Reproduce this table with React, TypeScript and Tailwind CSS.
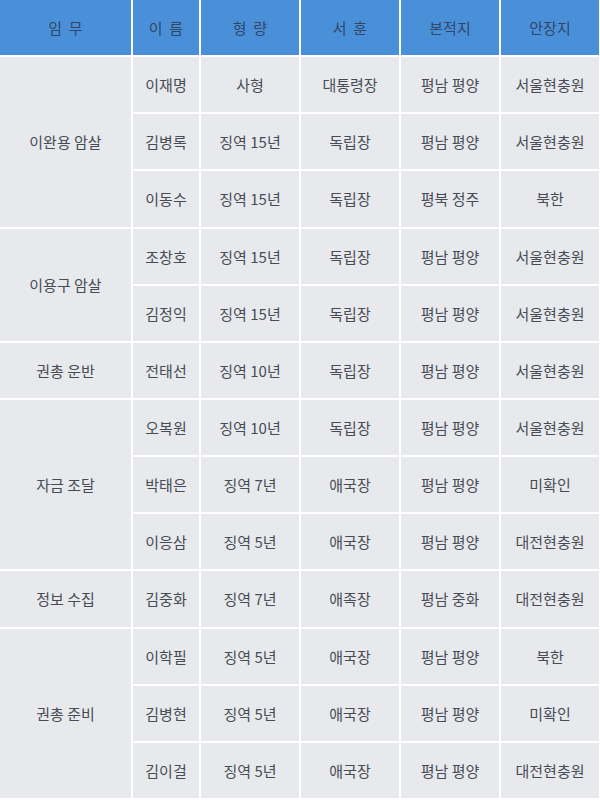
import React from 'react'

type Row = {
  name: string
  sentence: string
  award: string
  origin: string
  burial: string
}

type Group = {
  mission: string
  span: string
  rows: Row[]
}

const groups: Group[] = [
  {
    mission: '이완용 암살',
    span: 'row-span-3',
    rows: [
      { name: '이재명', sentence: '사형', award: '대통령장', origin: '평남 평양', burial: '서울현충원' },
      { name: '김병록', sentence: '징역 15년', award: '독립장', origin: '평남 평양', burial: '서울현충원' },
      { name: '이동수', sentence: '징역 15년', award: '독립장', origin: '평북 정주', burial: '북한' },
    ],
  },
  {
    mission: '이용구 암살',
    span: 'row-span-2',
    rows: [
      { name: '조창호', sentence: '징역 15년', award: '독립장', origin: '평남 평양', burial: '서울현충원' },
      { name: '김정익', sentence: '징역 15년', award: '독립장', origin: '평남 평양', burial: '서울현충원' },
    ],
  },
  {
    mission: '권총 운반',
    span: 'row-span-1',
    rows: [
      { name: '전태선', sentence: '징역 10년', award: '독립장', origin: '평남 평양', burial: '서울현충원' },
    ],
  },
  {
    mission: '자금 조달',
    span: 'row-span-3',
    rows: [
      { name: '오복원', sentence: '징역 10년', award: '독립장', origin: '평남 평양', burial: '서울현충원' },
      { name: '박태은', sentence: '징역 7년', award: '애국장', origin: '평남 평양', burial: '미확인' },
      { name: '이응삼', sentence: '징역 5년', award: '애국장', origin: '평남 평양', burial: '대전현충원' },
    ],
  },
  {
    mission: '정보 수집',
    span: 'row-span-1',
    rows: [
      { name: '김중화', sentence: '징역 7년', award: '애족장', origin: '평남 중화', burial: '대전현충원' },
    ],
  },
  {
    mission: '권총 준비',
    span: 'row-span-3',
    rows: [
      { name: '이학필', sentence: '징역 5년', award: '애국장', origin: '평남 평양', burial: '북한' },
      { name: '김병현', sentence: '징역 5년', award: '애국장', origin: '평남 평양', burial: '미확인' },
      { name: '김이걸', sentence: '징역 5년', award: '애국장', origin: '평남 평양', burial: '대전현충원' },
    ],
  },
]

const headers = ['임  무', '이  름', '형  량', '서  훈', '본적지', '안장지']

const cell = 'bg-[#e7e9ed] flex items-center justify-center text-[#474c54]'

const App = () => {
  return (
    <div className="w-[600px] h-[800px] bg-white pr-[2px] pb-[2px] grid grid-cols-[131px_66px_98px_98px_98px_98px] grid-rows-[repeat(14,minmax(0,1fr))] gap-[2px] text-[15px] leading-none font-['Noto_Sans_CJK_KR','Noto_Sans',sans-serif]">
      {headers.map((h) => (
        <div
          key={h}
          className="bg-[#4a90d9] flex items-center justify-center text-[#30476a] whitespace-pre"
        >
          {h}
        </div>
      ))}
      {groups.map((group) => (
        <React.Fragment key={group.mission}>
          <div className={`${cell} ${group.span}`}>{group.mission}</div>
          {group.rows.map((row) => (
            <React.Fragment key={row.name}>
              <div className={cell}>{row.name}</div>
              <div className={cell}>{row.sentence}</div>
              <div className={cell}>{row.award}</div>
              <div className={cell}>{row.origin}</div>
              <div className={cell}>{row.burial}</div>
            </React.Fragment>
          ))}
        </React.Fragment>
      ))}
    </div>
  )
}

export default App
